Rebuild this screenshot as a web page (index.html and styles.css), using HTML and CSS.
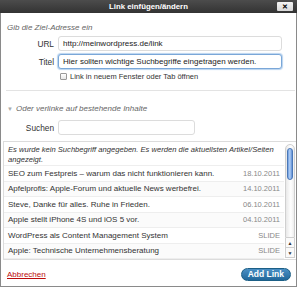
FILE: index.html
```html
<!DOCTYPE html>
<html lang="de">
<head>
    <meta charset="UTF-8">
    <meta name="viewport" content="width=device-width, initial-scale=1.0">
    <link rel="stylesheet" href="styles.css">
    <title>Link einfügen/ändern</title>
</head>
<body>
    <div class="dialog">
        <div class="titlebar">
            <span></span>
            <h1>Link einfügen/ändern</h1>
            <button class="close">&#x2715;</button>
        </div>
        <div class="content">
            <p class="howto">Gib die Ziel-Adresse ein</p>
            <div class="fields">
                <label>URL</label>
                <input type="text" class="field" value="http://meinwordpress.de/link">
                <label>Titel</label>
                <input type="text" class="field focus" value="Hier sollten wichtige Suchbegriffe eingetragen werden.">
                <span></span>
                <div class="check"><span class="box"></span>Link in neuem Fenster oder Tab öffnen</div>
            </div>
            <hr>
            <p class="toggle"><span class="arrow">&#9660;</span>Oder verlinke auf bestehende Inhalte</p>
            <div class="search">
                <label>Suchen</label>
                <input type="text" class="field">
            </div>
        </div>
        <div class="results">
            <div class="list">
                <p class="note">Es wurde kein Suchbegriff angegeben. Es werden die aktuellsten Artikel/Seiten angezeigt.</p>
                <div class="row"><span>SEO zum Festpreis – warum das nicht funktionieren kann.</span><span class="info">18.10.2011</span></div>
                <div class="row alt"><span>Apfelprofis: Apple-Forum und aktuelle News werbefrei.</span><span class="info">14.10.2011</span></div>
                <div class="row"><span>Steve, Danke für alles. Ruhe in Frieden.</span><span class="info">06.10.2011</span></div>
                <div class="row alt"><span>Apple stellt iPhone 4S und iOS 5 vor.</span><span class="info">04.10.2011</span></div>
                <div class="row"><span>WordPress als Content Management System</span><span class="info">SLIDE</span></div>
                <div class="row alt"><span>Apple: Technische Unternehmensberatung</span><span class="info">SLIDE</span></div>
            </div>
            <div class="scrollbar">
                <div class="track"><div class="thumb"></div></div>
                <div class="btn">&#9650;</div>
                <div class="btn">&#9660;</div>
            </div>
        </div>
        <div class="footer">
            <a href="#" class="cancel">Abbrechen</a>
            <button class="submit">Add Link</button>
        </div>
    </div>
</body>
</html>
```

FILE: styles.css
```css
*{
    padding: 0;
    margin: 0;
    box-sizing: border-box;
    font-family: "Liberation Sans", Arial, sans-serif;
}
body{
    background: #fff;
    color: #333;
    font-size: 8px;
}
.dialog{
    width: 297px;
    height: 287px;
    border: 1px solid #8a8a8a;
    border-top: none;
    display: flex;
    flex-direction: column;
    background: #fff;
}
.titlebar{
    height: 13px;
    background: linear-gradient(#4c4c4c, #333);
    display: grid;
    grid-template-columns: 1fr auto 1fr;
    align-items: center;
    margin: 0 -1px;
}
.titlebar h1{
    color: #fff;
    font-size: 7.8px;
    font-weight: bold;
}
.close{
    justify-self: end;
    width: 16px;
    height: 9px;
    margin-right: 4px;
    border: none;
    border-radius: 1px;
    background: linear-gradient(#f4f4f4, #d8d8d8);
    color: #000;
    font-size: 7px;
    font-weight: bold;
    line-height: 9px;
}
.content{
    padding: 0 14px 0 6px;
}
.howto{
    font-style: italic;
    color: #666;
    margin-top: 10px;
    height: 10px;
}
.fields{
    display: grid;
    grid-template-columns: 47px 1fr;
    column-gap: 4px;
    row-gap: 3px;
    align-items: center;
    margin-top: 3px;
}
label{
    text-align: right;
    font-size: 8.3px;
}
.field{
    height: 15px;
    border: 1px solid #dcdcdc;
    border-radius: 3px;
    padding: 0 4px;
    font-size: 8px;
    color: #222;
    outline: none;
}
.field.focus{
    border-color: #7aa7d8;
    box-shadow: 0 0 1px 1px #b9d3ef;
}
.check{
    display: flex;
    align-items: center;
    gap: 3px;
    font-size: 7.5px;
    margin-left: 2px;
}
.check .box{
    width: 7px;
    height: 7px;
    border: 1px solid #999;
    border-radius: 1px;
    background: linear-gradient(#fff, #e6e6e6);
}
hr{
    border: none;
    border-top: 1px solid #e3e3e3;
    margin: 9px -13px 0 -1px;
}
.toggle{
    font-style: italic;
    color: #666;
    margin-top: 13px;
    display: flex;
    align-items: center;
    gap: 3px;
}
.arrow{
    font-style: normal;
    font-size: 6px;
    color: #aaa;
}
.search{
    display: grid;
    grid-template-columns: 47px 137px;
    column-gap: 4px;
    align-items: center;
    margin-top: 7px;
}
.results{
    margin: 6px 0 0 2px;
    height: 119px;
    border: 1px solid #dcdcdc;
    border-right: none;
    display: flex;
    overflow: hidden;
}
.list{
    flex: 1;
}
.note{
    font-style: italic;
    font-size: 7.6px;
    padding: 3px 3px 3px 4px;
    line-height: 9.5px;
    height: 24px;
    color: #333;
    border-bottom: 1px solid #eee;
}
.row{
    display: flex;
    justify-content: space-between;
    align-items: center;
    height: 15.5px;
    padding: 0 4px;
    border-bottom: 1px solid #eee;
}
.row.alt{
    background: #fbfbfb;
}
.info{
    color: #888;
    font-size: 7.5px;
}
.scrollbar{
    width: 12px;
    display: flex;
    flex-direction: column;
    padding: 2px 1px 1px;
}
.track{
    flex: 1;
    border: 1px solid #cfcfcf;
    border-radius: 5px 5px 0 0;
    background: linear-gradient(90deg, #e8e8e8, #fff 60%, #eee);
    padding: 3px 1px 0;
}
.thumb{
    height: 32px;
    border-radius: 4px;
    border: 1px solid #4a78b8;
    background: linear-gradient(90deg, #6d9de0, #b5d1f6 45%, #5f8fd5);
}
.btn{
    height: 10px;
    border: 1px solid #cfcfcf;
    border-top: none;
    font-size: 5px;
    text-align: center;
    line-height: 10px;
    color: #333;
    background: #fafafa;
}
.footer{
    flex: 1;
    display: flex;
    justify-content: space-between;
    align-items: center;
    padding: 2px 5px 0 6px;
}
.cancel{
    color: #bc0b0b;
    text-decoration: underline;
    font-size: 8px;
}
.submit{
    height: 13px;
    padding: 0 6px;
    border-radius: 7px;
    border: 1px solid #1c5f86;
    background: linear-gradient(#4a8fc4, #21679a);
    color: #fff;
    font-weight: bold;
    font-size: 8.5px;
}
```
